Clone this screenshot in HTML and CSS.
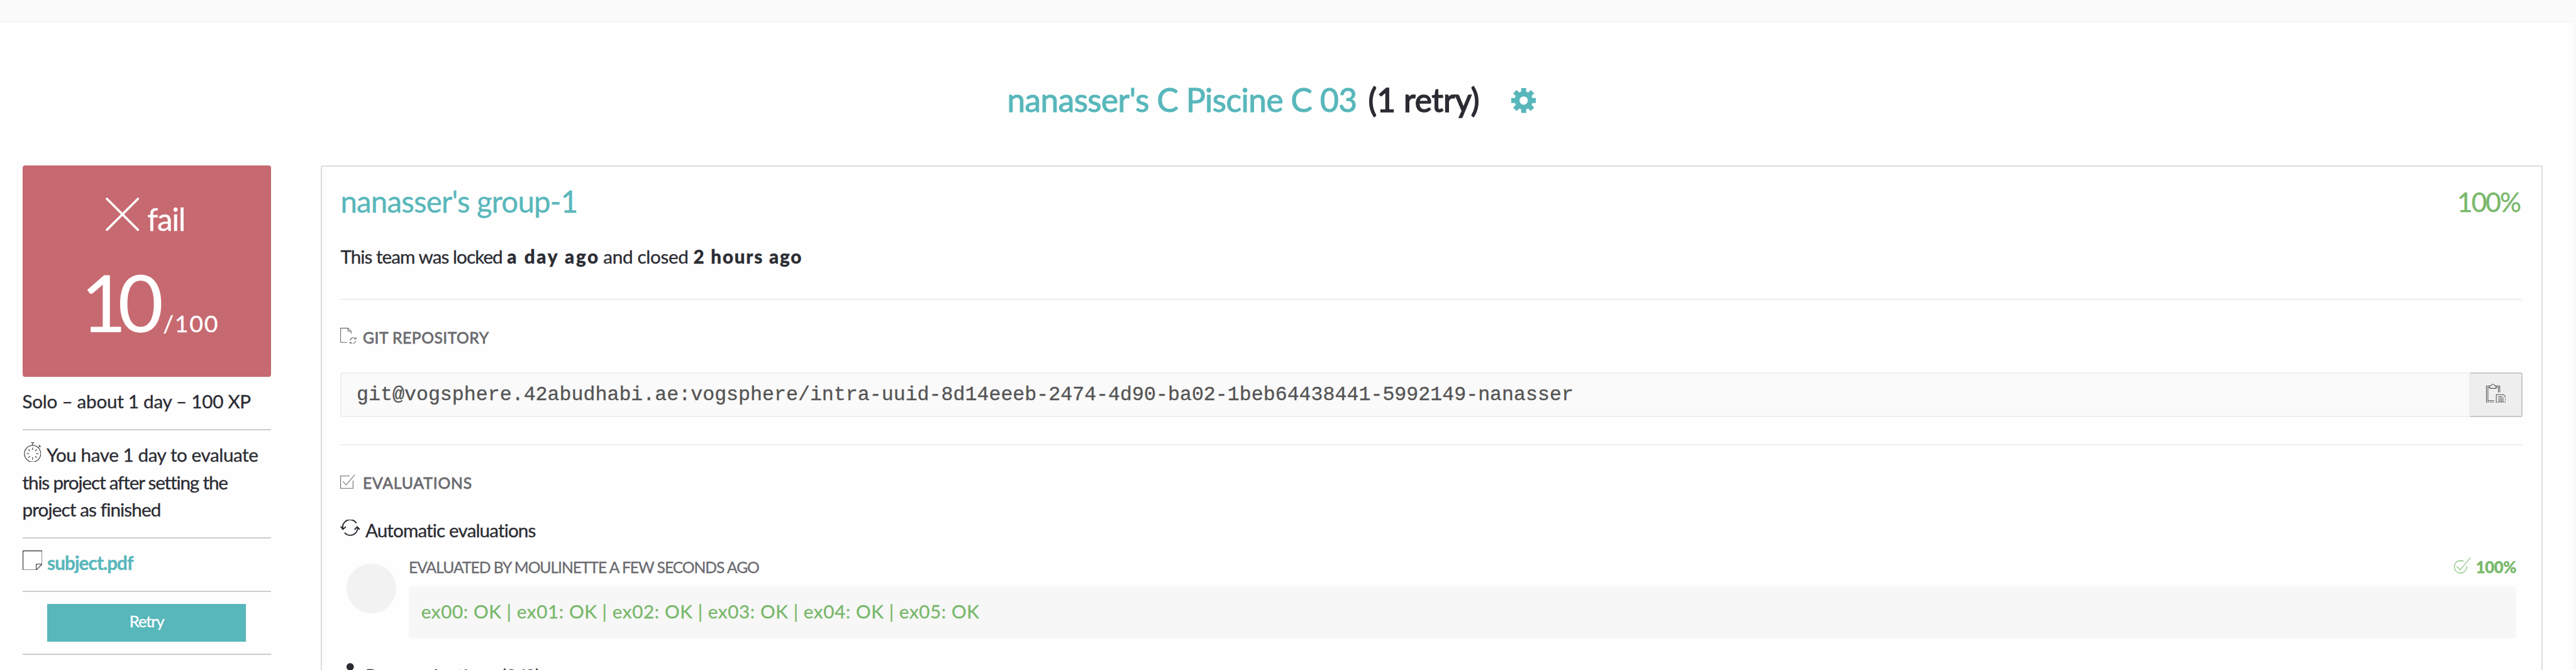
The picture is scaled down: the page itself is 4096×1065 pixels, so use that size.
FILE: index.html
```html
<!DOCTYPE html>
<html lang="en">
<head>
<meta charset="utf-8">
<title>C Piscine C 03</title>
<link rel="stylesheet" href="styles.css">
</head>
<body>
<div class="page">
  <div class="topbar"></div>
  <main class="content">
    <header class="header">
      <h1 class="title"><a class="t-link">nanasser's C Piscine C 03</a> <span class="t-retry">(1 retry)</span></h1>
      <svg class="gear" viewBox="0 0 40 40"><g fill="#58b7bb"><rect x="16" width="8" height="40"/><rect x="16" width="8" height="40" transform="rotate(45 20 20)"/><rect x="16" width="8" height="40" transform="rotate(90 20 20)"/><rect x="16" width="8" height="40" transform="rotate(135 20 20)"/><circle cx="20" cy="20" r="14.6"/></g><circle cx="20" cy="20" r="6.7" fill="#fff"/></svg>
    </header>
    <div class="columns">
      <aside class="side">
        <div class="result">
          <div class="status"><svg width="54" height="54" viewBox="0 0 54 54"><path d="M2 2L52 52M52 2L2 52" stroke="#fff" stroke-width="3.6" stroke-linecap="round"/></svg><span class="fail">fail</span></div>
          <div class="mark"><span class="mark-n">10</span><span class="mark-max">/100</span></div>
        </div>
        <div class="item"><span class="solo">Solo – about 1 day – 100 XP</span></div>
        <div class="item">
          <svg class="timer" width="28" height="32" viewBox="0 0 28 32" fill="none" stroke="#2b2c33" stroke-width="1.1"><circle cx="14" cy="18.3" r="13.2"/><path d="M14 5V.8M11.5.7h5M23.300 8.500l2.500-2.500M24.200 4.500l3 3M14 8.500v4M14 24v4M4.500 18.300h4M19.500 18.300h4M7.300 11.600l2.500 2.500M18.200 22.500l2.500 2.500M20.700 11.600l-2.500 2.500M9.800 22.500l-2.500 2.500"/></svg><span class="l1">You have 1 day to evaluate</span><br>
          <span class="l2">this project after setting the</span><br>
          <span class="l3">project as finished</span>
        </div>
        <div class="item"><svg class="note" width="32" height="32" viewBox="0 0 32 32" fill="none" stroke="#2b2c33" stroke-width="1.1"><path d="M.6.6h30.800V22L22 31.400H.6zM22 31.400V22h9.400"/></svg><a class="subject">subject.pdf</a></div>
        <div class="item action"><button class="retry">Retry</button></div>
      </aside>
      <section class="panel">
        <div class="team"><h2 class="team-name">nanasser's group-1</h2><span class="team-mark">100%</span></div>
        <p class="locked"><span class="k1">This team was locked</span><b class="k2">a day ago</b><span class="k3">and closed</span><b class="k4">2 hours ago</b></p>
        <hr>
        <h3 class="label"><svg width="26" height="26" viewBox="0 0 26 26" fill="none" stroke="#6b6b70" stroke-width="1.1"><path d="M17.500 9.500V5.500L12.500.6H.6v23H11M12.500.6v5h5"/><path d="M16 20.500a5 5 0 0 1 8.500-3M25 21a5 5 0 0 1-8.500 3M25.300 15v3h-3M15.600 26v-2.500h2.500"/></svg><span class="g1">GIT REPOSITORY</span></h3>
        <div class="repo">
          <div class="url">git@vogsphere.42abudhabi.ae:vogsphere/intra-uuid-8d14eeeb-2474-4d90-ba02-1beb64438441-5992149-nanasser</div>
          <button class="copy"><svg width="32" height="32" viewBox="0 0 32 32" fill="none" stroke="#555" stroke-width="1.1"><path d="M6 4.500H.6v27H13M6 6.500H3v22h10M16 4.500h6V15M16 6.500h3.800V15"/><path d="M6 8.500v-4l2.500-1a2.700 2.700 0 0 1 5 0l2.500 1v4z"/><path d="M16.500 18.500H28l3.400 3.500v9.400h-15zM19.500 21.500H26M19.500 24h9M19.500 26.500h9M19.500 29h9"/></svg></button>
        </div>
        <hr>
        <h3 class="label"><svg class="check" width="24" height="23" viewBox="0 0 24 23" fill="none" stroke="#6b6b70" stroke-width="1.1"><path d="M15 2.500H.6v20h20V10M4.500 11.500l5 5.500L23.500.5"/></svg><span class="g2">EVALUATIONS</span></h3>
        <h4 class="kind"><svg width="32" height="27" viewBox="0 0 32 27" fill="none" stroke="#2b2c33" stroke-width="2"><path d="M26 5.500A12 12 0 0 0 4.300 15M.8 11l3.500 4.500L9 11.500M7 21A12 12 0 0 0 28 12M23 16l4.500-4.500L31.300 16"/></svg><span class="a1">Automatic evaluations</span></h4>
        <div class="evaluation">
          <div class="avatar"></div>
          <div class="detail">
            <div class="by"><span class="e1">EVALUATED BY MOULINETTE A FEW SECONDS AGO</span><span class="score"><svg width="27" height="27" viewBox="0 0 27 27" fill="none" stroke="#79b86b" stroke-width="1.1"><path d="M15.500 6.500A10 10 0 1 0 20.500 14M4.500 14.500l5.500 5.500L26.500.5"/></svg>100%</span></div>
            <div class="comment"><span class="c1">ex00: OK | ex01: OK | ex02: OK | ex03: OK | ex04: OK | ex05: OK</span></div>
          </div>
        </div>
        <h4 class="kind peer"><svg width="32" height="32" viewBox="0 0 32 32" fill="#2b2c33"><circle cx="16" cy="6" r="6"/><path d="M11 11h10v2H11z"/></svg><span class="a2">Peer evaluations (2/2)</span></h4>
      </section>
    </div>
  </main>
</div>
</body>
</html>
```
FILE: styles.css
```css
* { box-sizing: border-box; margin: 0; padding: 0; }
html, body { overflow: hidden; }
body { background: #fafafa; }
.page {
  --line: 2.04px;
  zoom: 0.98794;
  width: 4146px;
  height: 1078px;
  overflow: hidden;
  display: flex;
  flex-direction: column;
  background: #fafafa;
  color: #2b2c33;
  font: 400 30px/44px Lato, "Open Sans", sans-serif;
  white-space: nowrap;
  -webkit-text-stroke: 0.35px currentColor;
}
svg { flex: none; }
button { border: 0; font: inherit; }
.topbar { height: 36px; flex: none; border-bottom: var(--line) solid #f7f7f7; }
.content { width: 4144px; height: 1042px; background: #fefefe; border-right: var(--line) solid #f7f7f7; }

.header { display: flex; height: 230px; padding: 95px 0 0 1621px; }
.title { width: 811px; font-size: 52px; line-height: 60px; font-weight: 400; -webkit-text-stroke-width: 1.1px; }
.t-link { color: #58b7bb; letter-spacing: -0.55px; }
.t-retry { letter-spacing: -0.05px; margin-left: 5px; -webkit-text-stroke-width: 1.6px; }
.gear { width: 40px; height: 40px; margin-top: 11px; }

.columns { display: flex; gap: 80px; padding-left: 36px; }
.side { width: 400px; flex: none; }
.result { height: 340px; padding-top: 52px; border-radius: 4px; background: #c76970; color: #fff; }
.status { display: flex; align-items: baseline; gap: 13px; height: 64px; padding-left: 134px; line-height: 60px; font-size: 50px; }
.fail { letter-spacing: -1.3px; }
.mark { display: flex; align-items: baseline; margin-top: 39px; padding-left: 94px; font-size: 127px; line-height: 130px; -webkit-text-stroke-width: 0; }
.mark-n { letter-spacing: -14px; }
.mark-max { margin-left: 13px; font-size: 38px; letter-spacing: 1.7px; -webkit-text-stroke-width: 0.35px; }
.item { padding: 18px 0 22px; border-bottom: var(--line) solid #ccc; }
.solo { letter-spacing: -0.27px; }
.timer { margin: 0 9px 0 2px; }
.note { margin-right: 8px; }
.l1 { letter-spacing: -0.42px; }
.l2 { letter-spacing: -1.18px; }
.l3 { letter-spacing: -0.89px; }
.subject { color: #58b7bb; font-weight: 700; letter-spacing: -0.9px; }
.action { padding: 20px 40px; }
.retry { display: block; width: 320px; height: 60px; padding-bottom: 4px; background: #58b7bb; color: #fff; font-size: 26px; letter-spacing: -1.2px; }

.panel { width: 3576px; height: 900px; padding: 26px 30px 0; border: var(--line) solid #dcdcdc; border-radius: 3px; }
.team { display: flex; justify-content: space-between; line-height: 60px; }
.team-name { font-size: 48px; font-weight: 400; color: #58b7bb; letter-spacing: -0.8px; }
.team-mark { padding: 1px 4px 0 0; font-size: 43px; color: #79b86b; letter-spacing: -2px; }
.locked { display: flex; margin: 36px 0 46px; }
.locked b { font-weight: 900; }
.k1 { width: 268px; letter-spacing: -0.95px; }
.k2 { width: 155px; letter-spacing: 2.7px; }
.k3 { width: 145px; letter-spacing: -0.32px; }
.k4 { letter-spacing: 1.8px; }
hr { border: 0; border-top: var(--line) solid #eee; }
.label { display: flex; gap: 10px; margin-top: 40px; font-size: 25px; line-height: 40px; font-weight: 400; color: #6b6b70; -webkit-text-stroke-width: 0.8px; }
.label svg { margin-top: 4px; }
.label .check { margin: 6px 2px 0 0; }
.g1 { letter-spacing: 0.52px; }
.g2 { letter-spacing: 0.87px; }
.repo { display: flex; height: 72px; margin: 36px 0 44px; }
.url { flex: 1; padding-left: 24px; border: var(--line) solid #eee; border-radius: 3px 0 0 3px; background: #fafafa; color: #555; font: 32px/68px "Liberation Mono", monospace; }
.copy { display: flex; justify-content: center; width: 84px; padding: 15px 0 0; border: solid #c8c8c8; border-width: var(--line) var(--line) var(--line) 0; border-radius: 0 3px 3px 0; background: #eee; }
.kind { display: flex; gap: 8px; margin-top: 34px; font-weight: 400; }
.kind svg { margin-top: 5px; }
.a1 { letter-spacing: -0.88px; }
.evaluation { display: flex; gap: 20px; margin-top: 18px; padding: 0 10px; }
.avatar { width: 80px; height: 80px; margin-top: 14px; border-radius: 50%; background: #f2f2f2; }
.detail { flex: 1; }
.by { display: flex; justify-content: space-between; font-size: 25px; line-height: 40px; color: #6b6b70; }
.e1 { letter-spacing: -1.05px; }
.score { display: flex; gap: 8px; font-size: 26px; font-weight: 900; color: #79b86b; letter-spacing: -0.4px; }
.score svg { margin-top: 4px; }
.comment { height: 84px; margin-top: 10px; padding-left: 20px; border-radius: 6px; background: #f7f7f7; color: #79b86b; line-height: 81px; }
.c1 { letter-spacing: 0.6px; }
.peer { margin-top: 38px; }
.peer svg { margin-top: 2px; }
.a2 { letter-spacing: -0.28px; }
```
